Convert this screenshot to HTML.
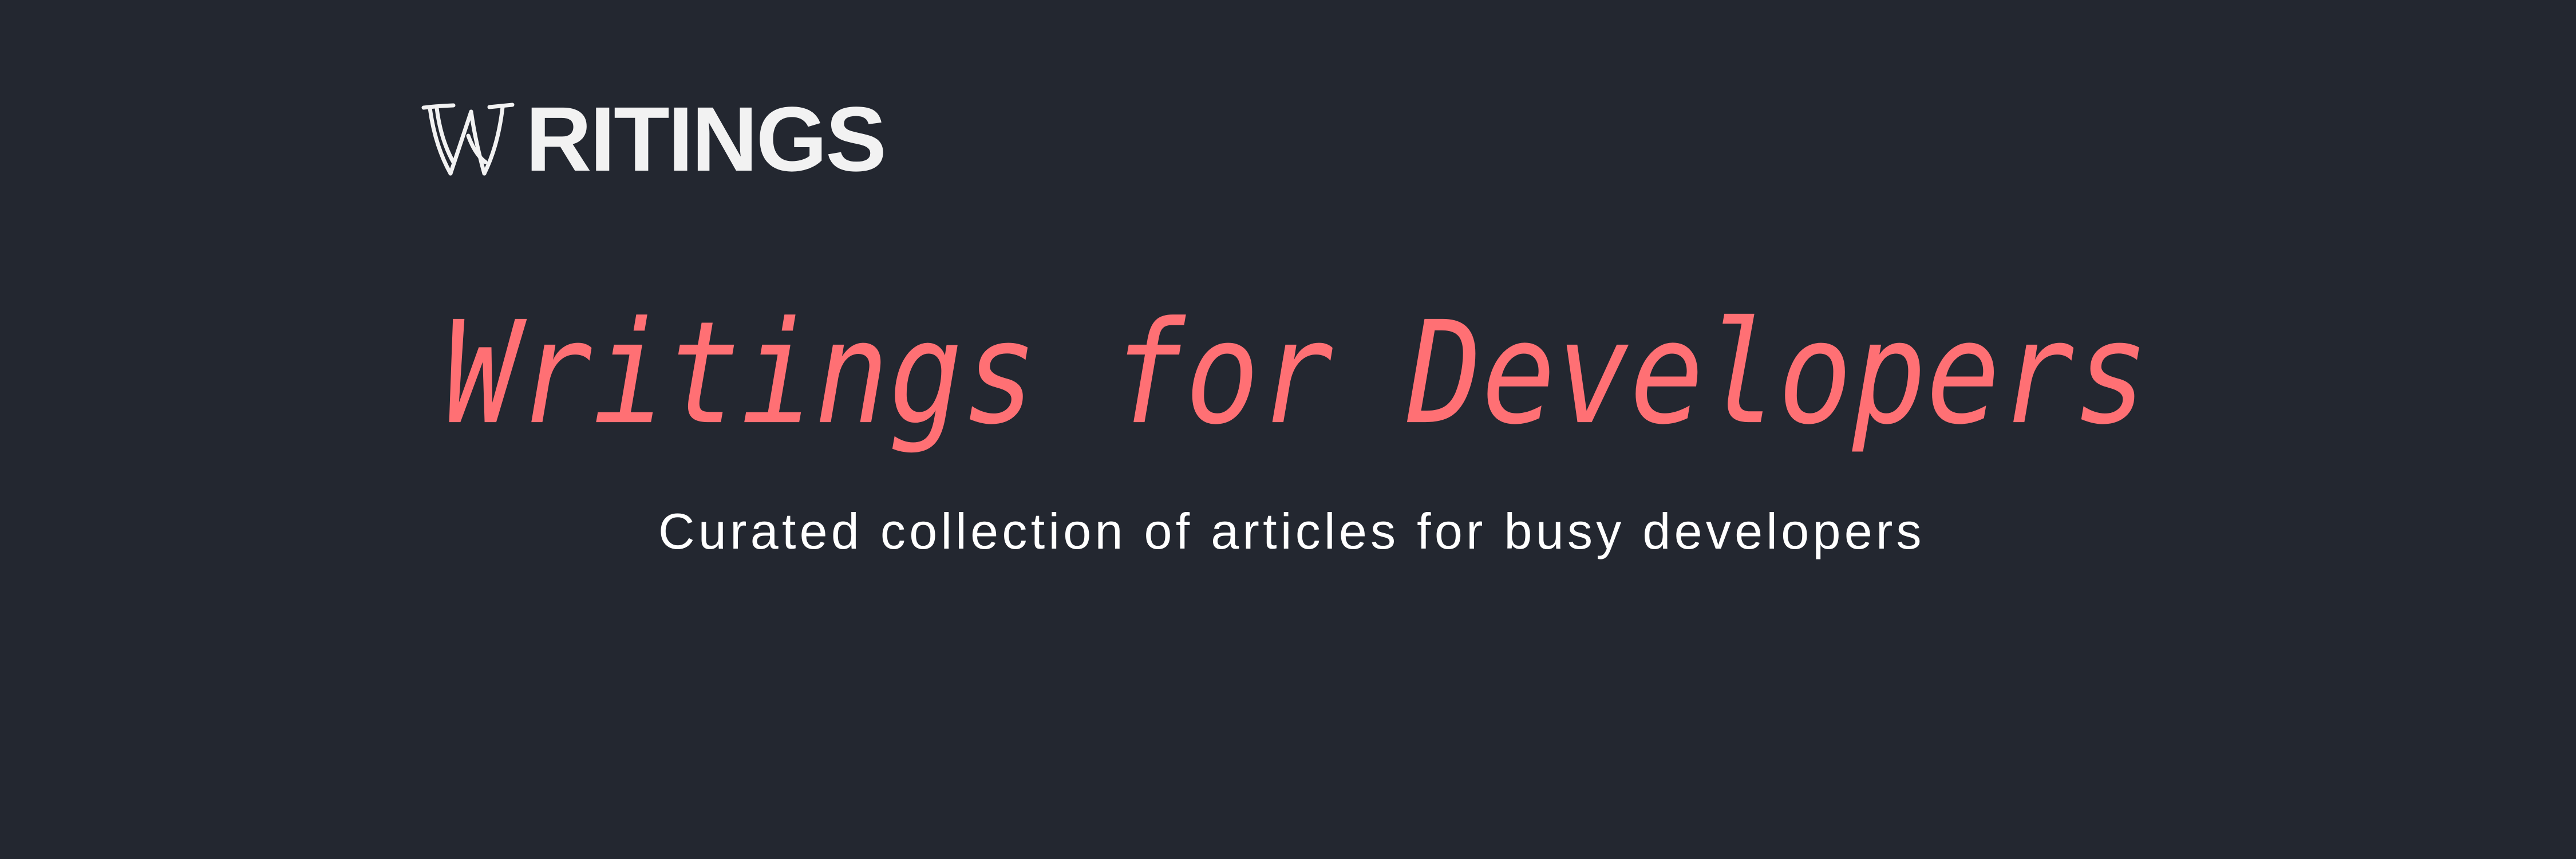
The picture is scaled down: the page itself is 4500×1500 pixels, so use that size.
<!DOCTYPE html>
<html><head><meta charset="utf-8"><style>
html,body{margin:0;padding:0}
body{width:4500px;height:1500px;background:#232730;position:relative;overflow:hidden}
.logo{position:absolute;left:918px;top:243px;font:bold 160px "Liberation Sans",sans-serif;color:#f2f2f2;line-height:0;white-space:nowrap;letter-spacing:-3px}
.title{position:absolute;left:776px;top:652px;font:oblique 215px "DejaVu Sans Mono",monospace;color:#ff7074;line-height:0;white-space:nowrap;transform:scaleY(1.15);transform-origin:0 0}
.sub{position:absolute;left:1150px;top:928px;font:88px "Liberation Sans",sans-serif;color:#fff;line-height:0;white-space:nowrap;letter-spacing:6.3px}
</style></head><body>
<svg style="position:absolute;left:730px;top:175px" width="180" height="140" viewBox="0 0 180 140" fill="none" stroke="#f2f2f2" stroke-width="7" stroke-linecap="round" stroke-linejoin="round">
<path d="M10 13 Q35 10 62 9"/>
<path d="M21 14 Q30 80 57 128"/>
<path d="M33 14 Q40 70 63 110"/>
<path d="M57 128 L93 20"/>
<path d="M93 20 Q100 70 116 128"/>
<path d="M88 62 Q100 95 118 108"/>
<path d="M148 12 Q140 80 116 128"/>
<path d="M125 12 Q145 10 165 8"/>
</svg>
<div class="logo">RITINGS</div>
<div class="title">Writings for Developers</div>
<div class="sub">Curated collection of articles for busy developers</div>
</body></html>
